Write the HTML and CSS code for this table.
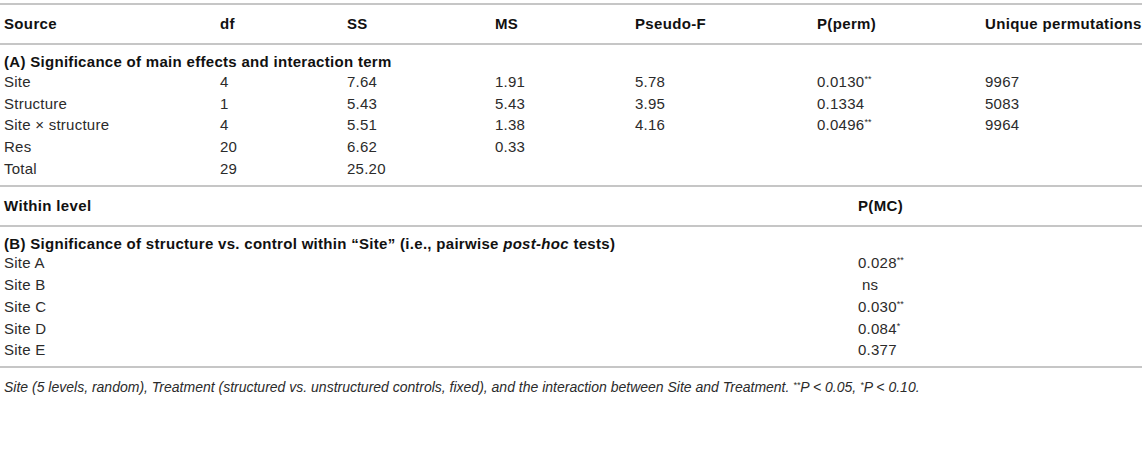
FILE: index.html
```html
<!DOCTYPE html>
<html lang="en">
<head>
  <meta charset="UTF-8" />
  <meta name="viewport" content="width=device-width, initial-scale=1.0" />
  <title>PERMANOVA results</title>
  <link rel="stylesheet" href="styles.css">
</head>
<body>
  <div class="wrap">
    <table class="stats">
      <colgroup>
        <col class="c-source">
        <col class="c-df">
        <col class="c-ss">
        <col class="c-ms">
        <col class="c-f">
        <col class="c-perm">
        <col class="c-uniq">
      </colgroup>
      <thead>
        <tr>
          <th>Source</th>
          <th>df</th>
          <th>SS</th>
          <th>MS</th>
          <th>Pseudo-F</th>
          <th>P(perm)</th>
          <th>Unique permutations</th>
        </tr>
      </thead>
      <tbody>
        <tr class="section">
          <td colspan="7">(A) Significance of main effects and interaction term</td>
        </tr>
        <tr>
          <td>Site</td><td>4</td><td>7.64</td><td>1.91</td><td>5.78</td><td>0.0130<sup>**</sup></td><td>9967</td>
        </tr>
        <tr>
          <td>Structure</td><td>1</td><td>5.43</td><td>5.43</td><td>3.95</td><td>0.1334</td><td>5083</td>
        </tr>
        <tr>
          <td>Site × structure</td><td>4</td><td>5.51</td><td>1.38</td><td>4.16</td><td>0.0496<sup>**</sup></td><td>9964</td>
        </tr>
        <tr>
          <td>Res</td><td>20</td><td>6.62</td><td>0.33</td><td></td><td></td><td></td>
        </tr>
        <tr class="last">
          <td>Total</td><td>29</td><td>25.20</td><td></td><td></td><td></td><td></td>
        </tr>
      </tbody>
    </table>

    <table class="stats">
      <colgroup>
        <col class="c-level">
        <col class="c-mc">
      </colgroup>
      <thead>
        <tr>
          <th>Within level</th>
          <th>P(MC)</th>
        </tr>
      </thead>
      <tbody>
        <tr class="section">
          <td colspan="2">(B) Significance of structure vs. control within “Site” (i.e., pairwise <i>post-hoc</i> tests)</td>
        </tr>
        <tr><td>Site A</td><td>0.028<sup>**</sup></td></tr>
        <tr><td>Site B</td><td class="ns">ns</td></tr>
        <tr><td>Site C</td><td>0.030<sup>**</sup></td></tr>
        <tr><td>Site D</td><td>0.084<sup>*</sup></td></tr>
        <tr class="last"><td>Site E</td><td>0.377</td></tr>
      </tbody>
    </table>

    <p class="note">Site (5 levels, random), Treatment (structured vs. unstructured controls, fixed), and the interaction between Site and Treatment. <sup>**</sup>P &lt; 0.05, <sup>*</sup>P &lt; 0.10.</p>
  </div>
</body>
</html>
```

FILE: styles.css
```css
body {
  margin: 0;
  padding: 3px 0 0;
  background: #fff;
  font-family: 'Liberation Sans', Arial, sans-serif;
  font-size: 15px;
  color: #2b2b2b;
}
.wrap {
  width: 1142px;
}
.stats {
  width: 100%;
  border-collapse: collapse;
  table-layout: fixed;
  border-top: 2px solid #c6c6c6;
}
.stats + .stats {
  border-top: none;
}
.c-source { width: 216px; }
.c-df { width: 127px; }
.c-ss { width: 148px; }
.c-ms { width: 140px; }
.c-f { width: 182px; }
.c-perm { width: 168px; }
.c-level { width: 854px; }
th {
  text-align: left;
  font-weight: bold;
  color: #111;
  letter-spacing: 0.35px;
  padding: 0 4px;
  height: 38px;
  line-height: 18px;
  border-bottom: 2px solid #c6c6c6;
  white-space: nowrap;
}
td {
  padding: 2px 4px;
  line-height: 17.75px;
  letter-spacing: 0.25px;
  vertical-align: middle;
  white-space: nowrap;
}
.section td {
  font-weight: bold;
  color: #111;
  letter-spacing: 0.3px;
  padding-top: 8px;
  padding-bottom: 0;
}
.last td {
  padding-bottom: 7px;
  border-bottom: 2px solid #c6c6c6;
}
sup {
  font-size: 9px;
  vertical-align: top;
  line-height: 9px;
  position: relative;
  top: 2px;
  letter-spacing: 0;
}
td.ns {
  padding-left: 8px;
}
.note {
  margin: 0;
  padding: 11px 4px 0;
  font-size: 14px;
  font-style: italic;
  line-height: 17px;
}
```
